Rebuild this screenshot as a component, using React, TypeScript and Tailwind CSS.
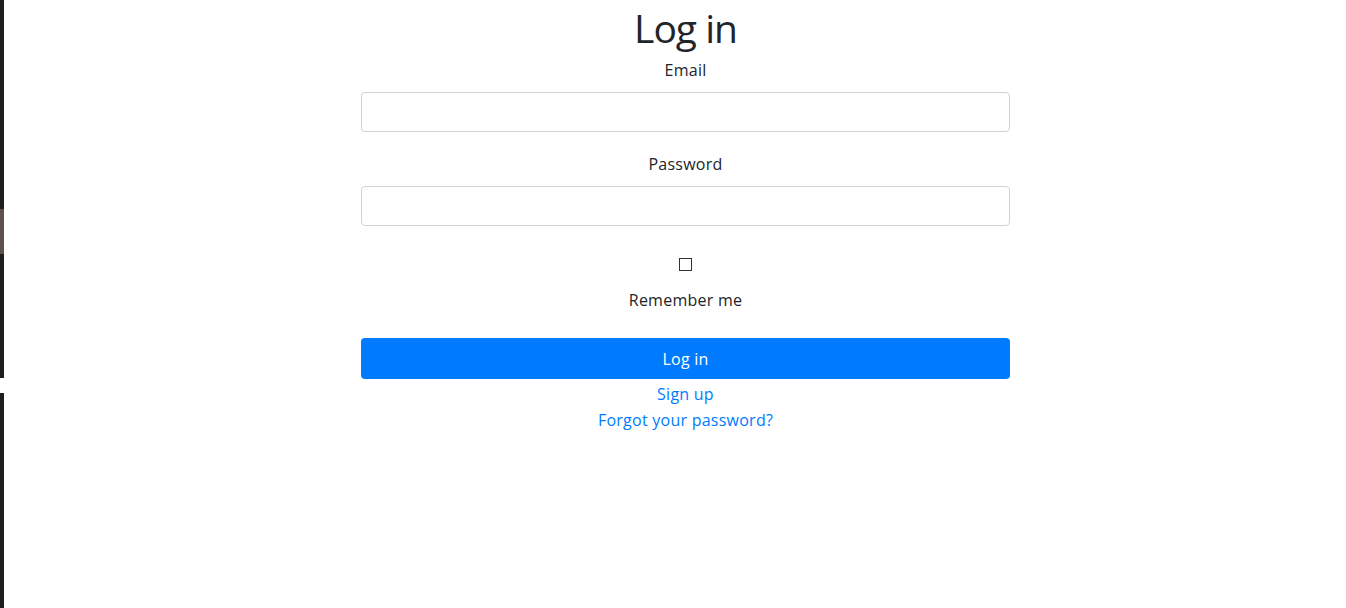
import React from 'react';

const Field: React.FC<{ label: string; type: string; className?: string }> = ({ label, type, className }) => (
  <div className={`flex flex-col items-center ${className ?? ''}`}>
    <label className="text-base leading-6 text-[#212529]">{label}</label>
    <input
      type={type}
      className="mt-[10px] h-[40px] w-full rounded-[4px] border border-[#ced4da] bg-white px-3 text-base outline-none"
    />
  </div>
);

export default function App() {
  return (
    <div
      className="flex h-[608px] w-full bg-white tracking-[0.25px]"
      style={{ fontFamily: '"Open Sans", "Noto Sans", sans-serif' }}
    >
      {/* left window edge */}
      <div className="flex w-[4px] shrink-0 flex-col">
        <div className="h-[209px] bg-[#1f1f1f]" />
        <div className="h-[45px] bg-[#5d514d]" />
        <div className="h-[124px] bg-[#1f1f1f]" />
        <div className="h-[15px] bg-white" />
        <div className="flex-1 bg-[#1f1f1f]" />
      </div>

      <div className="ml-[357px] flex w-[649px] flex-col">
        <h1 className="mt-[4px] text-center text-[39px] leading-[47px] tracking-[-1px] text-[#212529]">Log in</h1>

        <Field label="Email" type="email" className="mt-[7px]" />
        <Field label="Password" type="password" className="mt-[20px]" />

        <div className="mt-[32px] flex flex-col items-center">
          <span className="block h-[13px] w-[13px] border border-[#333333] bg-white" />
          <label className="mt-[17px] text-base leading-6 text-[#212529]">Remember me</label>
        </div>

        <button className="mt-[26px] flex h-[41px] w-full items-center justify-center rounded-[4px] bg-[#007bff] text-base leading-6 text-white">
          Log in
        </button>

        <div className="mt-[2px] flex flex-col items-center text-base leading-[26px] text-[#007bff]">
          <a href="#">Sign up</a>
          <a href="#">Forgot your password?</a>
        </div>
      </div>
    </div>
  );
}
